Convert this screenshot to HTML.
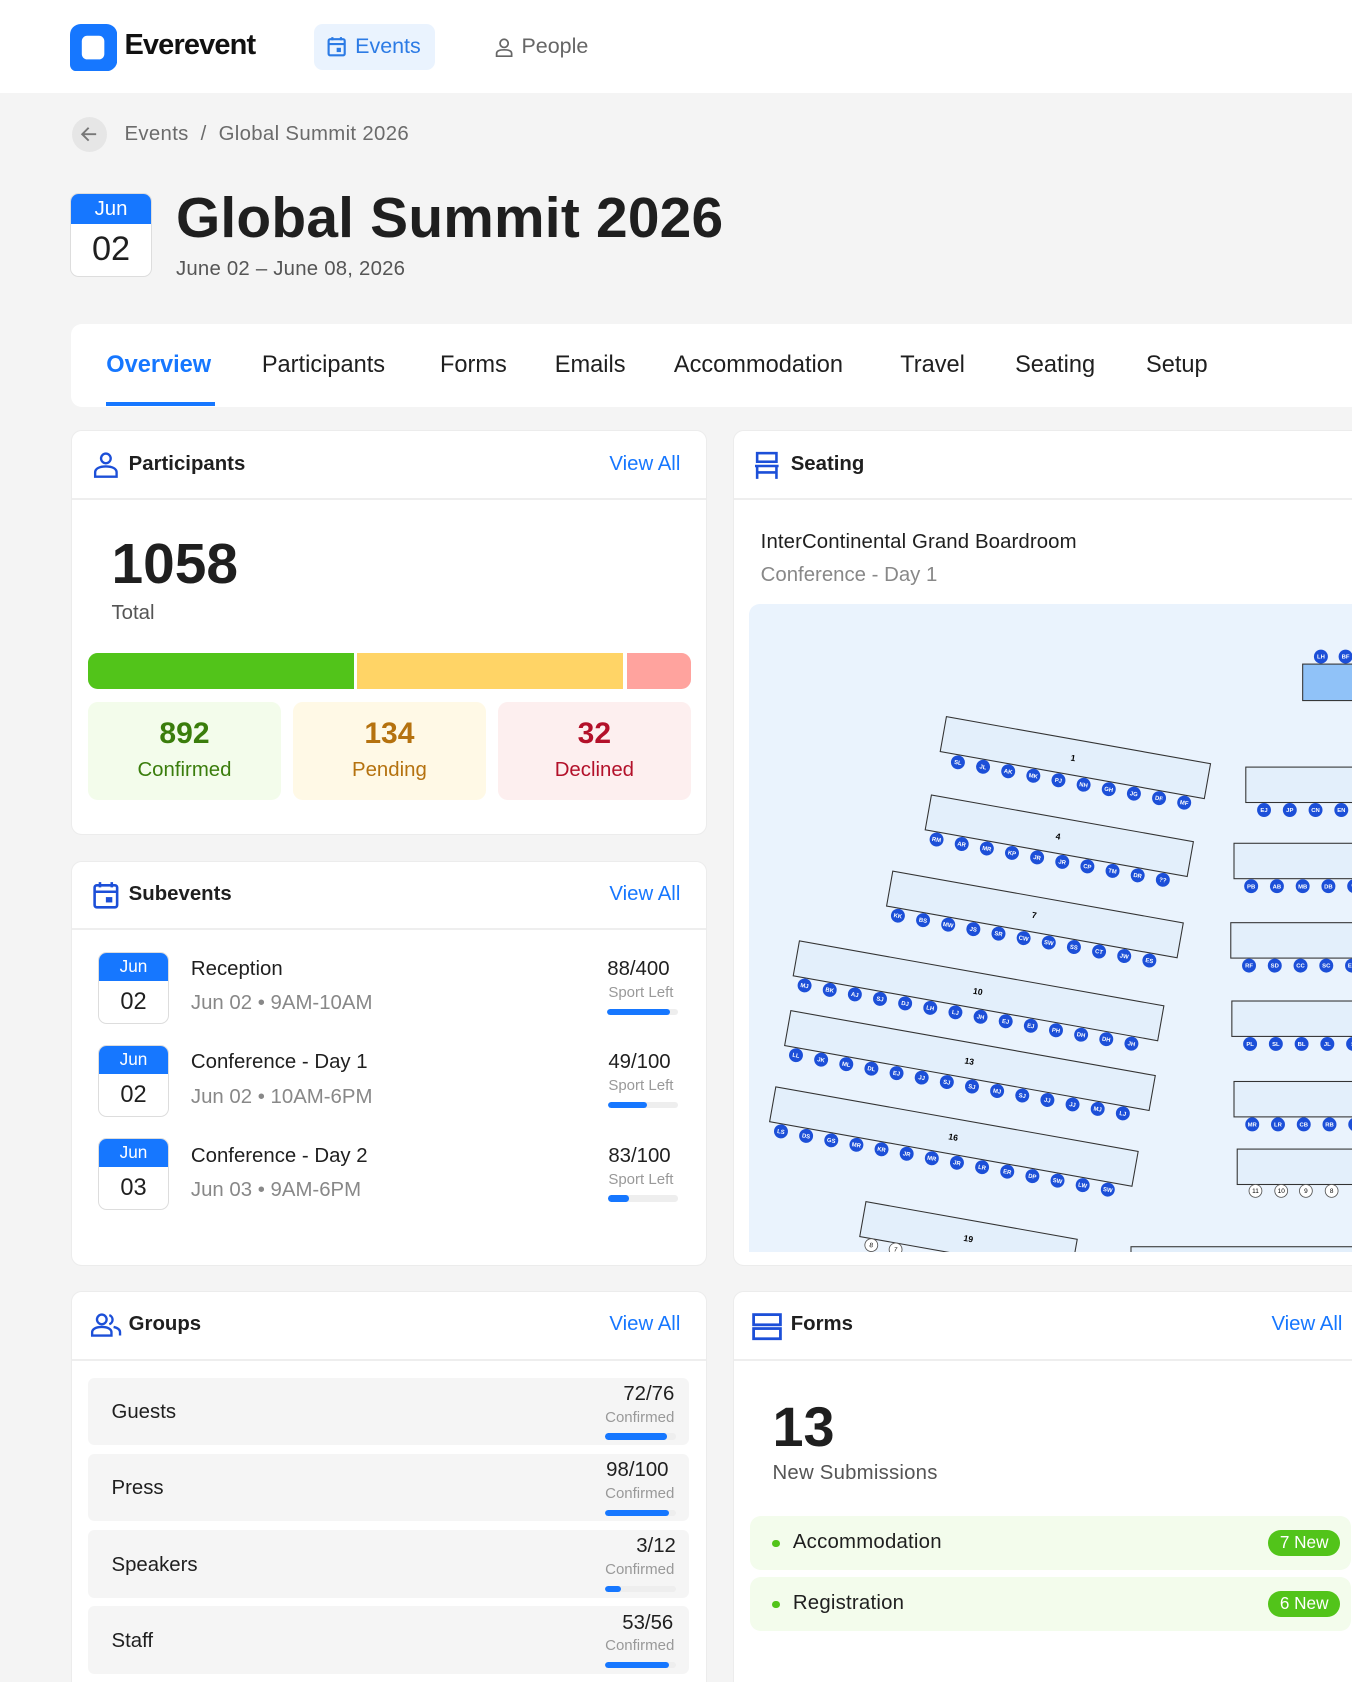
<!DOCTYPE html>
<html><head><meta charset="utf-8">
<style>
*{margin:0;padding:0;box-sizing:border-box}
html,body{width:1352px;height:1682px;overflow:hidden;background:#f4f4f4}
#w{zoom:1.07302;width:1260px;height:1568px;position:relative;overflow:hidden;font-family:"Liberation Sans",sans-serif;color:#1f1f1f}
.a{position:absolute;white-space:nowrap}
.card{position:absolute;background:#fff;border-radius:10px;border:1px solid #ececec}
.hd{position:absolute;left:0;right:0;top:0;height:64px;border-bottom:2px solid #eee}
.ht{position:absolute;left:53px;top:20px;font-size:19px;font-weight:bold}
.va{position:absolute;top:20px;font-size:19px;color:#1677ff}
.badge{position:absolute;width:67px;height:67px;border-radius:8px;border:1px solid #ddd;background:#fff;overflow:hidden;text-align:center}
.badge .t{background:#1677ff;color:#fff;height:26px;line-height:26px;font-size:16px}
.badge .b{font-size:22px;line-height:40px}
.bar{position:absolute;height:6px;width:66px;border-radius:3px;background:#eee;overflow:hidden}
.bar i{display:block;height:6px;background:#1677ff;border-radius:3px}
.grow{position:absolute;left:15px;width:560px;height:63px;background:#f5f5f5;border-radius:6px}
svg text{font-family:"Liberation Sans",sans-serif}
.s circle{fill:#1c4fd8}
.s text{fill:#fff;font-size:5.5px;font-weight:bold;text-anchor:middle}
.tb{fill:#e3effb;stroke:#333;stroke-width:1}
</style></head><body><div id="w">
<!-- header -->
<div class="a" style="left:0;top:0;width:1260px;height:87px;background:#fff"></div>
<svg class="a" style="left:65px;top:22px" width="44" height="44" viewBox="0 0 44 44"><path d="M10 0H34A10 10 0 0 1 44 10V34A10 10 0 0 1 34 44H6A6 6 0 0 1 0 38V10A10 10 0 0 1 10 0Z" fill="#1677ff"/><rect x="11" y="11" width="21" height="22" rx="5" fill="#fff"/></svg>
<div class="a" style="left:116px;top:27px;font-size:27px;font-weight:bold;letter-spacing:-0.8px;color:#111">Everevent</div>
<div class="a" style="left:293px;top:22px;width:112px;height:43px;background:#eaf3fe;border-radius:8px"></div>
<svg class="a" style="left:305px;top:34px" width="18" height="19" viewBox="0 0 18 19"><rect x="1.5" y="3" width="15" height="15" rx="1.5" fill="none" stroke="#2c7be5" stroke-width="2"/><path d="M1.5 7.5H16.5M5 1V4M13 1V4" stroke="#2c7be5" stroke-width="2"/><rect x="9" y="11" width="4" height="4" fill="#2c7be5"/></svg>
<div class="a" style="left:331px;top:32px;font-size:20px;color:#2c7be5">Events</div>
<svg class="a" style="left:461px;top:35px" width="17" height="18" viewBox="0 0 17 18"><circle cx="8.5" cy="5" r="3.8" fill="none" stroke="#666" stroke-width="1.6"/><path d="M1.5 17V14.5C1.5 12 4 11 8.5 11S15.5 12 15.5 14.5V17Z" fill="none" stroke="#666" stroke-width="1.6"/></svg>
<div class="a" style="left:486px;top:32px;font-size:20px;color:#666">People</div>
<!-- breadcrumb -->
<div class="a" style="left:67px;top:109px;width:33px;height:33px;border-radius:50%;background:#e6e6e6"></div>
<svg class="a" style="left:74px;top:116px" width="19" height="19" viewBox="0 0 19 19"><path d="M16 9.5H3M9 3.5L3 9.5L9 15.5" fill="none" stroke="#777" stroke-width="1.8"/></svg>
<div class="a" style="left:116px;top:115px;font-size:19px;color:#6b6b6b;letter-spacing:0.3px">Events &nbsp;/ &nbsp;Global Summit 2026</div>
<!-- title -->
<div class="badge" style="left:65px;top:180px;width:77px;height:78px"><div class="t" style="height:28px;line-height:29px;font-size:19px">Jun</div><div class="b" style="font-size:32px;line-height:48px">02</div></div>
<div class="a" style="left:164px;top:173px;font-size:53px;font-weight:bold;letter-spacing:0.2px">Global Summit 2026</div>
<div class="a" style="left:164px;top:240px;font-size:19px;color:#555;letter-spacing:0.2px">June 02 – June 08, 2026</div>
<!-- tabs -->
<div class="card" style="left:66px;top:302px;width:1220px;height:77px;border:none"></div>
<div class="a" style="left:99px;top:328px;font-size:22px;color:#1677ff;font-weight:bold">Overview</div>
<div class="a" style="left:99px;top:375px;width:101px;height:3px;background:#1677ff"></div>
<div class="a" style="left:244px;top:328px;font-size:22px">Participants</div>
<div class="a" style="left:410px;top:328px;font-size:22px">Forms</div>
<div class="a" style="left:517px;top:328px;font-size:22px">Emails</div>
<div class="a" style="left:628px;top:328px;font-size:22px">Accommodation</div>
<div class="a" style="left:839px;top:328px;font-size:22px">Travel</div>
<div class="a" style="left:946px;top:328px;font-size:22px">Seating</div>
<div class="a" style="left:1068px;top:328px;font-size:22px">Setup</div>

<!-- Participants -->
<div class="card" style="left:66px;top:401px;width:593px;height:377px">
 <div class="hd"></div>
 <svg class="a" style="left:20px;top:19px" width="24" height="25" viewBox="0 0 24 25"><circle cx="12" cy="6" r="4.5" fill="none" stroke="#1c4fd8" stroke-width="2.2"/><path d="M2 23V19C2 15.5 6 13.5 12 13.5S22 15.5 22 19V23Z" fill="none" stroke="#1c4fd8" stroke-width="2.2"/></svg>
 <div class="ht">Participants</div><div class="va" style="left:501px">View All</div>
 <div class="a" style="left:37px;top:94px;font-size:53px;font-weight:bold">1058</div>
 <div class="a" style="left:37px;top:159px;font-size:19px;color:#555">Total</div>
 <div class="a" style="left:15px;top:207px;width:248px;height:33px;background:#52c41a;border-radius:9px 0 0 9px"></div>
 <div class="a" style="left:266px;top:207px;width:248px;height:33px;background:#ffd466"></div>
 <div class="a" style="left:517px;top:207px;width:60px;height:33px;background:#ffa39e;border-radius:0 9px 9px 0"></div>
 <div class="a" style="left:15px;top:252px;width:180px;height:92px;background:#f3fceb;border-radius:9px;text-align:center"><div style="font-size:28px;font-weight:bold;color:#3a7d0c;margin-top:14px">892</div><div style="font-size:19px;color:#3a7d0c;margin-top:8px">Confirmed</div></div>
 <div class="a" style="left:206px;top:252px;width:180px;height:92px;background:#fff9e6;border-radius:9px;text-align:center"><div style="font-size:28px;font-weight:bold;color:#b5720f;margin-top:14px">134</div><div style="font-size:19px;color:#b5720f;margin-top:8px">Pending</div></div>
 <div class="a" style="left:397px;top:252px;width:180px;height:92px;background:#fdefef;border-radius:9px;text-align:center"><div style="font-size:28px;font-weight:bold;color:#b3112a;margin-top:14px">32</div><div style="font-size:19px;color:#b3112a;margin-top:8px">Declined</div></div>
</div>

<!-- Subevents -->
<div class="card" style="left:66px;top:802px;width:593px;height:378px">
 <div class="hd"></div>
 <svg class="a" style="left:20px;top:18px" width="24" height="26" viewBox="0 0 24 26"><rect x="1.5" y="4" width="21" height="20.5" rx="2" fill="none" stroke="#1c4fd8" stroke-width="2.4"/><path d="M1.5 10H22.5M6.5 1V6M17.5 1V6" stroke="#1c4fd8" stroke-width="2.4"/><rect x="12" y="15" width="6" height="5" fill="#1c4fd8"/></svg>
 <div class="ht">Subevents</div><div class="va" style="left:501px">View All</div>
 <div class="badge" style="left:24px;top:84px"><div class="t">Jun</div><div class="b">02</div></div>
 <div class="a" style="left:111px;top:90px;font-size:19px">Reception</div>
 <div class="a" style="left:111px;top:122px;font-size:19px;color:#888">Jun 02 • 9AM-10AM</div>
 <div class="a" style="left:499px;top:90px;font-size:19px">88/400</div>
 <div class="a" style="left:500px;top:114px;font-size:14px;color:#999">Sport Left</div>
 <div class="bar" style="left:499px;top:137px"><i style="width:88%"></i></div>
 <div class="badge" style="left:24px;top:171px"><div class="t">Jun</div><div class="b">02</div></div>
 <div class="a" style="left:111px;top:177px;font-size:19px">Conference - Day 1</div>
 <div class="a" style="left:111px;top:209px;font-size:19px;color:#888">Jun 02 • 10AM-6PM</div>
 <div class="a" style="left:500px;top:177px;font-size:19px">49/100</div>
 <div class="a" style="left:500px;top:201px;font-size:14px;color:#999">Sport Left</div>
 <div class="bar" style="left:500px;top:224px;width:65px"><i style="width:55%"></i></div>
 <div class="badge" style="left:24px;top:258px"><div class="t">Jun</div><div class="b">03</div></div>
 <div class="a" style="left:111px;top:264px;font-size:19px">Conference - Day 2</div>
 <div class="a" style="left:111px;top:296px;font-size:19px;color:#888">Jun 03 • 9AM-6PM</div>
 <div class="a" style="left:500px;top:264px;font-size:19px">83/100</div>
 <div class="a" style="left:500px;top:288px;font-size:14px;color:#999">Sport Left</div>
 <div class="bar" style="left:500px;top:311px;width:65px"><i style="width:30%"></i></div>
</div>

<!-- Groups -->
<div class="card" style="left:66px;top:1203px;width:593px;height:400px">
 <div class="hd"></div>
 <svg class="a" style="left:17px;top:20px" width="30" height="22" viewBox="0 0 30 22"><circle cx="11" cy="6" r="4.5" fill="none" stroke="#1c4fd8" stroke-width="2.2"/><path d="M2 21V18C2 15 5.5 13 11 13S20 15 20 18V21Z" fill="none" stroke="#1c4fd8" stroke-width="2.2"/><path d="M18 2A4.5 4.5 0 0 1 18 10.5M22 13C25.5 13.8 28 15.5 28 18V21" fill="none" stroke="#1c4fd8" stroke-width="2.2"/></svg>
 <div class="ht">Groups</div><div class="va" style="left:501px">View All</div>
 <div class="grow" style="top:80px"></div><div class="a" style="left:37px;top:102px;font-size:19px">Guests</div><div class="a" style="left:514px;top:85px;font-size:19px">72/76</div><div class="a" style="left:497px;top:109px;font-size:14px;color:#999">Confirmed</div><div class="bar" style="left:497px;top:132px"><i style="width:88%"></i></div>
 <div class="grow" style="top:151px"></div><div class="a" style="left:37px;top:173px;font-size:19px">Press</div><div class="a" style="left:498px;top:156px;font-size:19px">98/100</div><div class="a" style="left:497px;top:180px;font-size:14px;color:#999">Confirmed</div><div class="bar" style="left:497px;top:203px"><i style="width:90%"></i></div>
 <div class="grow" style="top:222px"></div><div class="a" style="left:37px;top:244px;font-size:19px">Speakers</div><div class="a" style="left:526px;top:227px;font-size:19px">3/12</div><div class="a" style="left:497px;top:251px;font-size:14px;color:#999">Confirmed</div><div class="bar" style="left:497px;top:274px"><i style="width:22%"></i></div>
 <div class="grow" style="top:293px"></div><div class="a" style="left:37px;top:315px;font-size:19px">Staff</div><div class="a" style="left:513px;top:298px;font-size:19px">53/56</div><div class="a" style="left:497px;top:322px;font-size:14px;color:#999">Confirmed</div><div class="bar" style="left:497px;top:345px"><i style="width:90%"></i></div>
</div>

<!-- Seating -->
<div class="card" style="left:683px;top:401px;width:620px;height:779px">
 <div class="hd"></div>
 <svg class="a" style="left:20px;top:18px" width="22" height="27" viewBox="0 0 22 27"><rect x="2" y="2" width="18" height="8" fill="none" stroke="#1c4fd8" stroke-width="2.4"/><path d="M0 14H22M2 14V26M20 14V26M2 20H20" stroke="#1c4fd8" stroke-width="2.4" fill="none"/></svg>
 <div class="ht">Seating</div>
 <div class="a" style="left:25px;top:93px;font-size:19px;letter-spacing:0.1px">InterContinental Grand Boardroom</div>
 <div class="a" style="left:25px;top:124px;font-size:19px;color:#888">Conference - Day 1</div>
</div>
<svg class="a" style="left:698px;top:563px" width="580" height="604" viewBox="698 563 580 604">
<rect x="698" y="563" width="600" height="620" rx="10" fill="#eaf3fd"/>
<g transform="translate(1214,619)"><rect class="tb" width="80" height="34" style="fill:#90c2f8"/><g class="s"><circle cx="17" cy="-7" r="6.5"/><text x="17" y="-5">LH</text><circle cx="40" cy="-7" r="6.5"/><text x="40" y="-5">BF</text></g></g>
<g transform="translate(882,668) rotate(10.1)"><rect class="tb" width="250" height="33"/><text x="123" y="20" font-size="8" font-weight="bold" text-anchor="middle">1</text><g class="s">
<circle cx="18" cy="40" r="6.5"/><text x="18" y="42">SL</text><circle cx="41.8" cy="40" r="6.5"/><text x="41.8" y="42">JL</text><circle cx="65.6" cy="40" r="6.5"/><text x="65.6" y="42">AK</text><circle cx="89.4" cy="40" r="6.5"/><text x="89.4" y="42">MK</text><circle cx="113.2" cy="40" r="6.5"/><text x="113.2" y="42">PJ</text><circle cx="137" cy="40" r="6.5"/><text x="137" y="42">NH</text><circle cx="160.8" cy="40" r="6.5"/><text x="160.8" y="42">GH</text><circle cx="184.6" cy="40" r="6.5"/><text x="184.6" y="42">JG</text><circle cx="208.4" cy="40" r="6.5"/><text x="208.4" y="42">DF</text><circle cx="232.2" cy="40" r="6.5"/><text x="232.2" y="42">MF</text></g></g>
<g transform="translate(868,741) rotate(10.1)"><rect class="tb" width="248" height="33"/><text x="123" y="20" font-size="8" font-weight="bold" text-anchor="middle">4</text><g class="s">
<circle cx="12" cy="40" r="6.5"/><text x="12" y="42">RM</text><circle cx="35.8" cy="40" r="6.5"/><text x="35.8" y="42">AR</text><circle cx="59.6" cy="40" r="6.5"/><text x="59.6" y="42">MR</text><circle cx="83.4" cy="40" r="6.5"/><text x="83.4" y="42">KP</text><circle cx="107.2" cy="40" r="6.5"/><text x="107.2" y="42">JR</text><circle cx="131" cy="40" r="6.5"/><text x="131" y="42">JR</text><circle cx="154.8" cy="40" r="6.5"/><text x="154.8" y="42">CP</text><circle cx="178.6" cy="40" r="6.5"/><text x="178.6" y="42">TM</text><circle cx="202.4" cy="40" r="6.5"/><text x="202.4" y="42">DR</text><circle cx="226.2" cy="40" r="6.5"/><text x="226.2" y="42">??</text></g></g>
<g transform="translate(832,812) rotate(10.1)"><rect class="tb" width="275" height="33"/><text x="137" y="20" font-size="8" font-weight="bold" text-anchor="middle">7</text><g class="s">
<circle cx="12" cy="40" r="6.5"/><text x="12" y="42">KK</text><circle cx="35.8" cy="40" r="6.5"/><text x="35.8" y="42">BS</text><circle cx="59.6" cy="40" r="6.5"/><text x="59.6" y="42">MW</text><circle cx="83.4" cy="40" r="6.5"/><text x="83.4" y="42">JS</text><circle cx="107.2" cy="40" r="6.5"/><text x="107.2" y="42">SR</text><circle cx="131" cy="40" r="6.5"/><text x="131" y="42">CW</text><circle cx="154.8" cy="40" r="6.5"/><text x="154.8" y="42">SW</text><circle cx="178.6" cy="40" r="6.5"/><text x="178.6" y="42">SS</text><circle cx="202.4" cy="40" r="6.5"/><text x="202.4" y="42">CT</text><circle cx="226.2" cy="40" r="6.5"/><text x="226.2" y="42">JW</text><circle cx="250" cy="40" r="6.5"/><text x="250" y="42">ES</text></g></g>
<g transform="translate(745,877) rotate(10.1)"><rect class="tb" width="345" height="33"/><text x="172" y="20" font-size="8" font-weight="bold" text-anchor="middle">10</text><g class="s">
<circle cx="12" cy="40" r="6.5"/><text x="12" y="42">MJ</text><circle cx="35.8" cy="40" r="6.5"/><text x="35.8" y="42">BK</text><circle cx="59.6" cy="40" r="6.5"/><text x="59.6" y="42">AJ</text><circle cx="83.4" cy="40" r="6.5"/><text x="83.4" y="42">SJ</text><circle cx="107.2" cy="40" r="6.5"/><text x="107.2" y="42">DJ</text><circle cx="131" cy="40" r="6.5"/><text x="131" y="42">LH</text><circle cx="154.8" cy="40" r="6.5"/><text x="154.8" y="42">LJ</text><circle cx="178.6" cy="40" r="6.5"/><text x="178.6" y="42">JH</text><circle cx="202.4" cy="40" r="6.5"/><text x="202.4" y="42">EJ</text><circle cx="226.2" cy="40" r="6.5"/><text x="226.2" y="42">EJ</text><circle cx="250" cy="40" r="6.5"/><text x="250" y="42">PH</text><circle cx="273.8" cy="40" r="6.5"/><text x="273.8" y="42">DH</text><circle cx="297.6" cy="40" r="6.5"/><text x="297.6" y="42">DH</text><circle cx="321.4" cy="40" r="6.5"/><text x="321.4" y="42">JH</text></g></g>
<g transform="translate(737,942) rotate(10.1)"><rect class="tb" width="345" height="33"/><text x="172" y="20" font-size="8" font-weight="bold" text-anchor="middle">13</text><g class="s">
<circle cx="12" cy="40" r="6.5"/><text x="12" y="42">LL</text><circle cx="35.8" cy="40" r="6.5"/><text x="35.8" y="42">JK</text><circle cx="59.6" cy="40" r="6.5"/><text x="59.6" y="42">ML</text><circle cx="83.4" cy="40" r="6.5"/><text x="83.4" y="42">DL</text><circle cx="107.2" cy="40" r="6.5"/><text x="107.2" y="42">EJ</text><circle cx="131" cy="40" r="6.5"/><text x="131" y="42">JJ</text><circle cx="154.8" cy="40" r="6.5"/><text x="154.8" y="42">SJ</text><circle cx="178.6" cy="40" r="6.5"/><text x="178.6" y="42">SJ</text><circle cx="202.4" cy="40" r="6.5"/><text x="202.4" y="42">MJ</text><circle cx="226.2" cy="40" r="6.5"/><text x="226.2" y="42">SJ</text><circle cx="250" cy="40" r="6.5"/><text x="250" y="42">JJ</text><circle cx="273.8" cy="40" r="6.5"/><text x="273.8" y="42">JJ</text><circle cx="297.6" cy="40" r="6.5"/><text x="297.6" y="42">MJ</text><circle cx="321.4" cy="40" r="6.5"/><text x="321.4" y="42">LJ</text></g></g>
<g transform="translate(723,1013) rotate(10.1)"><rect class="tb" width="343" height="33"/><text x="171" y="20" font-size="8" font-weight="bold" text-anchor="middle">16</text><g class="s">
<circle cx="12" cy="40" r="6.5"/><text x="12" y="42">LS</text><circle cx="35.8" cy="40" r="6.5"/><text x="35.8" y="42">DS</text><circle cx="59.6" cy="40" r="6.5"/><text x="59.6" y="42">GS</text><circle cx="83.4" cy="40" r="6.5"/><text x="83.4" y="42">MR</text><circle cx="107.2" cy="40" r="6.5"/><text x="107.2" y="42">KR</text><circle cx="131" cy="40" r="6.5"/><text x="131" y="42">JR</text><circle cx="154.8" cy="40" r="6.5"/><text x="154.8" y="42">MR</text><circle cx="178.6" cy="40" r="6.5"/><text x="178.6" y="42">JR</text><circle cx="202.4" cy="40" r="6.5"/><text x="202.4" y="42">LR</text><circle cx="226.2" cy="40" r="6.5"/><text x="226.2" y="42">ER</text><circle cx="250" cy="40" r="6.5"/><text x="250" y="42">DP</text><circle cx="273.8" cy="40" r="6.5"/><text x="273.8" y="42">SW</text><circle cx="297.6" cy="40" r="6.5"/><text x="297.6" y="42">LW</text><circle cx="321.4" cy="40" r="6.5"/><text x="321.4" y="42">SW</text></g></g>
<g transform="translate(807,1120) rotate(10.1)"><rect class="tb" width="200" height="33"/><text x="100" y="20" font-size="8" font-weight="bold" text-anchor="middle">19</text><g font-size="6" text-anchor="middle"><circle cx="12" cy="39" r="6" fill="#fff" stroke="#555" stroke-width=".8"/><text x="12" y="41">8</text><circle cx="35" cy="39" r="6" fill="#fff" stroke="#555" stroke-width=".8"/><text x="35" y="41">7</text></g></g>
<g transform="translate(1161,715)"><rect class="tb" width="120" height="33"/><g class="s"><circle cx="17" cy="40" r="6.5"/><text x="17" y="42">EJ</text><circle cx="41" cy="40" r="6.5"/><text x="41" y="42">JP</text><circle cx="65" cy="40" r="6.5"/><text x="65" y="42">CN</text><circle cx="89" cy="40" r="6.5"/><text x="89" y="42">EN</text></g></g>
<g transform="translate(1150,786)"><rect class="tb" width="130" height="33"/><g class="s"><circle cx="16" cy="40" r="6.5"/><text x="16" y="42">PB</text><circle cx="40" cy="40" r="6.5"/><text x="40" y="42">AB</text><circle cx="64" cy="40" r="6.5"/><text x="64" y="42">MB</text><circle cx="88" cy="40" r="6.5"/><text x="88" y="42">DB</text><circle cx="112" cy="40" r="6.5"/><text x="112" y="42">W</text></g></g>
<g transform="translate(1147,860)"><rect class="tb" width="130" height="33"/><g class="s"><circle cx="17" cy="40" r="6.5"/><text x="17" y="42">RF</text><circle cx="41" cy="40" r="6.5"/><text x="41" y="42">SD</text><circle cx="65" cy="40" r="6.5"/><text x="65" y="42">CC</text><circle cx="89" cy="40" r="6.5"/><text x="89" y="42">SC</text><circle cx="113" cy="40" r="6.5"/><text x="113" y="42">EN</text></g></g>
<g transform="translate(1148,933)"><rect class="tb" width="130" height="33"/><g class="s"><circle cx="17" cy="40" r="6.5"/><text x="17" y="42">PL</text><circle cx="41" cy="40" r="6.5"/><text x="41" y="42">SL</text><circle cx="65" cy="40" r="6.5"/><text x="65" y="42">BL</text><circle cx="89" cy="40" r="6.5"/><text x="89" y="42">JL</text><circle cx="113" cy="40" r="6.5"/><text x="113" y="42">S</text></g></g>
<g transform="translate(1150,1008)"><rect class="tb" width="130" height="33"/><g class="s"><circle cx="17" cy="40" r="6.5"/><text x="17" y="42">MR</text><circle cx="41" cy="40" r="6.5"/><text x="41" y="42">LR</text><circle cx="65" cy="40" r="6.5"/><text x="65" y="42">CB</text><circle cx="89" cy="40" r="6.5"/><text x="89" y="42">RB</text><circle cx="113" cy="40" r="6.5"/><text x="113" y="42">D</text></g></g>
<g transform="translate(1153,1071)"><rect class="tb" width="130" height="33"/><g font-size="6" text-anchor="middle"><circle cx="17" cy="39" r="6" fill="#fff" stroke="#555" stroke-width=".8"/><text x="17" y="41">11</text><circle cx="41" cy="39" r="6" fill="#fff" stroke="#555" stroke-width=".8"/><text x="41" y="41">10</text><circle cx="64" cy="39" r="6" fill="#fff" stroke="#555" stroke-width=".8"/><text x="64" y="41">9</text><circle cx="88" cy="39" r="6" fill="#fff" stroke="#555" stroke-width=".8"/><text x="88" y="41">8</text></g></g>
<rect x="1054" y="1162" width="260" height="20" class="tb"/>
</svg>

<!-- Forms -->
<div class="card" style="left:683px;top:1203px;width:620px;height:400px">
 <div class="hd"></div>
 <svg class="a" style="left:17px;top:20px" width="28" height="26" viewBox="0 0 28 26"><rect x="1.5" y="1.5" width="25" height="9.5" fill="none" stroke="#1c4fd8" stroke-width="2.6"/><rect x="1.5" y="14.5" width="25" height="9.5" fill="none" stroke="#1c4fd8" stroke-width="2.6"/></svg>
 <div class="ht">Forms</div><div class="va" style="left:501px">View All</div>
 <div class="a" style="left:36px;top:95px;font-size:52px;font-weight:bold">13</div>
 <div class="a" style="left:36px;top:159px;font-size:19px;color:#555;letter-spacing:0.2px">New Submissions</div>
 <div class="a" style="left:15px;top:209px;width:560px;height:50px;background:#f3fcec;border-radius:10px"></div>
 <div class="a" style="left:36px;top:231px;width:7px;height:7px;border-radius:50%;background:#52c41a"></div>
 <div class="a" style="left:55px;top:223px;font-size:19px;letter-spacing:0.2px">Accommodation</div>
 <div class="a" style="left:498px;top:222px;width:67px;height:24px;border-radius:12px;background:#52c41a;color:#fff;font-size:16px;text-align:center;line-height:24px">7 New</div>
 <div class="a" style="left:15px;top:266px;width:560px;height:50px;background:#f3fcec;border-radius:10px"></div>
 <div class="a" style="left:36px;top:288px;width:7px;height:7px;border-radius:50%;background:#52c41a"></div>
 <div class="a" style="left:55px;top:280px;font-size:19px;letter-spacing:0.2px">Registration</div>
 <div class="a" style="left:498px;top:279px;width:67px;height:24px;border-radius:12px;background:#52c41a;color:#fff;font-size:16px;text-align:center;line-height:24px">6 New</div>
</div>
</div></body></html>
